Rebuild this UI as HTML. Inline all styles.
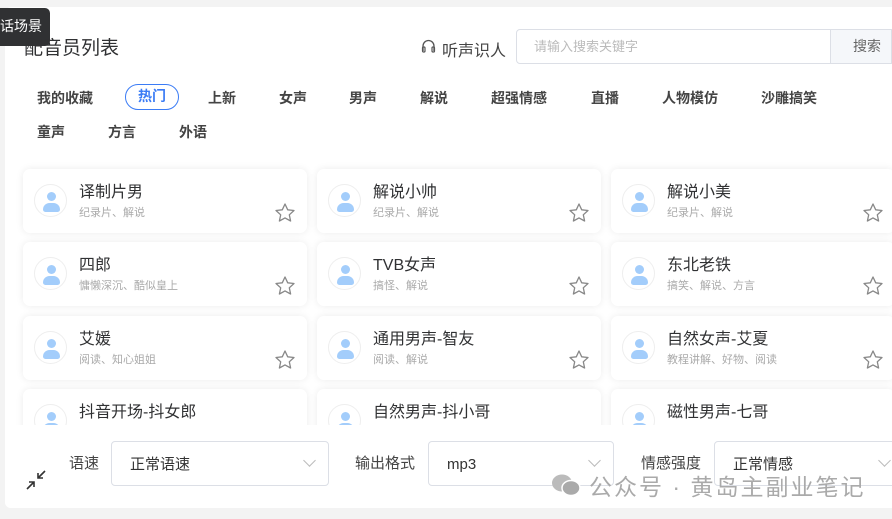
<!DOCTYPE html>
<html><head><meta charset="utf-8"><style>
*{margin:0;padding:0;box-sizing:border-box}
body{width:892px;height:519px;overflow:hidden;background:#f3f3f3;font-family:"Liberation Sans","Noto Sans CJK SC",sans-serif;position:relative;color:#333}
.panel{position:absolute;left:5px;top:7px;width:900px;height:501px;background:#fff;border-radius:6px}
.abs{position:absolute}
.tip{position:absolute;left:-6px;top:8px;width:56px;height:38px;background:#303133;border-radius:5px;color:#fff;font-size:14px;line-height:36px;padding-left:6px}
.title{left:24px;top:33px;font-size:19px;color:#303133}
.tab{position:absolute;font-size:14px;font-weight:bold;color:#444;top:88px}
.r2{top:122px}
.pill{left:125px;top:84px;width:54px;height:26px;border:1px solid #3b7cf5;border-radius:13px;color:#3b7cf5;text-align:center;line-height:23px;padding:0}
.card{position:absolute;width:284px;height:64px;background:#fff;border-radius:7px;box-shadow:0 0 8px rgba(0,0,0,.08)}
.av{position:absolute;left:11px;top:15px;width:33px;height:33px;border:1px solid #eee;border-radius:50%;overflow:hidden}
.av:before{content:"";position:absolute;left:12px;top:7px;width:9px;height:9px;border-radius:50%;background:#a3cdfb}
.av:after{content:"";position:absolute;left:8px;top:18px;width:17px;height:9px;border-radius:8px 8px 3px 3px;background:#a3cdfb}
.nm{position:absolute;left:56px;top:9px;font-size:16px;color:#303133}
.tg{position:absolute;left:56px;top:35px;font-size:11px;color:#aaa}
.st{position:absolute;right:11px;top:33px}
.list{position:absolute;left:0;top:160px;width:892px;height:265px;overflow:hidden}
.bot{position:absolute;left:5px;top:425px;width:900px;height:83px;background:#fff;border-radius:0 0 6px 6px}
.sel{position:absolute;top:441px;height:45px;border:1px solid #dcdfe6;border-radius:4px;font-size:15px;color:#333;line-height:45px;padding-left:18px;background:#fff}
.sel i{position:absolute;right:14px;top:14px;width:9px;height:9px;border-right:1px solid #bbb;border-bottom:1px solid #bbb;transform:rotate(45deg)}
.lb{position:absolute;top:452px;font-size:15px;color:#444}
</style></head><body>
<div class="panel"></div>
<div class="tip">话场景</div>
<div class="abs title">配音员列表</div>
<svg class="abs" style="left:421px;top:39px" width="15" height="14" viewBox="0 0 15 14"><path d="M2 12V7a5.5 5.5 0 0 1 11 0v5" fill="none" stroke="#555" stroke-width="1.3"/><rect x="1.5" y="8" width="2.5" height="5" rx="1" fill="none" stroke="#555" stroke-width="1.2"/><rect x="11" y="8" width="2.5" height="5" rx="1" fill="none" stroke="#555" stroke-width="1.2"/></svg>
<div class="abs" style="left:442px;top:37px;font-size:16px;color:#444">听声识人</div>
<div class="abs" style="left:516px;top:29px;width:376px;height:35px;border:1px solid #dcdfe6;border-radius:4px 0 0 4px;font-size:13px;color:#bbb;line-height:33px;padding-left:17px">请输入搜索关键字</div>
<div class="abs" style="left:830px;top:29px;width:62px;height:35px;background:#f5f7fa;border:1px solid #dcdfe6;font-size:14px;color:#666;line-height:33px;padding-left:22px">搜索</div>
<div class="tab" style="left:37px">我的收藏</div>
<div class="tab pill">热门</div>
<div class="tab" style="left:208px">上新</div>
<div class="tab" style="left:279px">女声</div>
<div class="tab" style="left:349px">男声</div>
<div class="tab" style="left:420px">解说</div>
<div class="tab" style="left:491px">超强情感</div>
<div class="tab" style="left:591px">直播</div>
<div class="tab" style="left:662px">人物模仿</div>
<div class="tab" style="left:761px">沙雕搞笑</div>
<div class="tab r2" style="left:37px">童声</div>
<div class="tab r2" style="left:108px">方言</div>
<div class="tab r2" style="left:179px">外语</div>
<div class="list">
<svg width="0" height="0" style="position:absolute"><defs><symbol id="s" viewBox="0 0 22 22"><path d="M11 2l2.7 5.8 6.3.7-4.7 4.3 1.3 6.2L11 15.9 5.4 19l1.3-6.2L2 8.5l6.3-.7z" fill="none" stroke="#888" stroke-width="1.3" stroke-linejoin="round"/></symbol></defs></svg>
<div class="card" style="left:23px;top:9px"><div class="av"></div><div class="nm">译制片男</div><div class="tg">纪录片、解说</div><svg class="st" width="22" height="22"><use href="#s"/></svg></div>
<div class="card" style="left:317px;top:9px"><div class="av"></div><div class="nm">解说小帅</div><div class="tg">纪录片、解说</div><svg class="st" width="22" height="22"><use href="#s"/></svg></div>
<div class="card" style="left:611px;top:9px"><div class="av"></div><div class="nm">解说小美</div><div class="tg">纪录片、解说</div><svg class="st" width="22" height="22"><use href="#s"/></svg></div>
<div class="card" style="left:23px;top:82px"><div class="av"></div><div class="nm">四郎</div><div class="tg">慵懒深沉、酷似皇上</div><svg class="st" width="22" height="22"><use href="#s"/></svg></div>
<div class="card" style="left:317px;top:82px"><div class="av"></div><div class="nm">TVB女声</div><div class="tg">搞怪、解说</div><svg class="st" width="22" height="22"><use href="#s"/></svg></div>
<div class="card" style="left:611px;top:82px"><div class="av"></div><div class="nm">东北老铁</div><div class="tg">搞笑、解说、方言</div><svg class="st" width="22" height="22"><use href="#s"/></svg></div>
<div class="card" style="left:23px;top:156px"><div class="av"></div><div class="nm">艾媛</div><div class="tg">阅读、知心姐姐</div><svg class="st" width="22" height="22"><use href="#s"/></svg></div>
<div class="card" style="left:317px;top:156px"><div class="av"></div><div class="nm">通用男声-智友</div><div class="tg">阅读、解说</div><svg class="st" width="22" height="22"><use href="#s"/></svg></div>
<div class="card" style="left:611px;top:156px"><div class="av"></div><div class="nm">自然女声-艾夏</div><div class="tg">教程讲解、好物、阅读</div><svg class="st" width="22" height="22"><use href="#s"/></svg></div>
<div class="card" style="left:23px;top:229px"><div class="av"></div><div class="nm">抖音开场-抖女郎</div></div>
<div class="card" style="left:317px;top:229px"><div class="av"></div><div class="nm">自然男声-抖小哥</div></div>
<div class="card" style="left:611px;top:229px"><div class="av"></div><div class="nm">磁性男声-七哥</div></div>
</div>
<div class="bot"></div>
<svg class="abs" style="left:24px;top:468px" width="24" height="24" viewBox="0 0 24 24"><path d="M21 3l-7 7M14 5v5h5M3 21l7-7M5 14h5v5" fill="none" stroke="#333" stroke-width="1.6"/></svg>
<div class="lb" style="left:69px">语速</div>
<div class="sel" style="left:111px;width:218px">正常语速<i></i></div>
<div class="lb" style="left:355px">输出格式</div>
<div class="sel" style="left:428px;width:186px">mp3<i></i></div>
<div class="lb" style="left:641px">情感强度</div>
<div class="sel" style="left:714px;width:190px">正常情感<i></i></div>
<svg class="abs" style="left:550px;top:472px" width="34" height="26" viewBox="0 0 34 26"><ellipse cx="12" cy="11" rx="10" ry="8.5" fill="#bbb"/><ellipse cx="21" cy="16" rx="9" ry="7.5" fill="#aaa" stroke="#fff" stroke-width="1.5"/></svg>
<div class="abs" style="left:589px;top:468px;font-size:23px;color:#aaa;letter-spacing:2px">公众号 · 黄岛主副业笔记</div>
</body></html>
